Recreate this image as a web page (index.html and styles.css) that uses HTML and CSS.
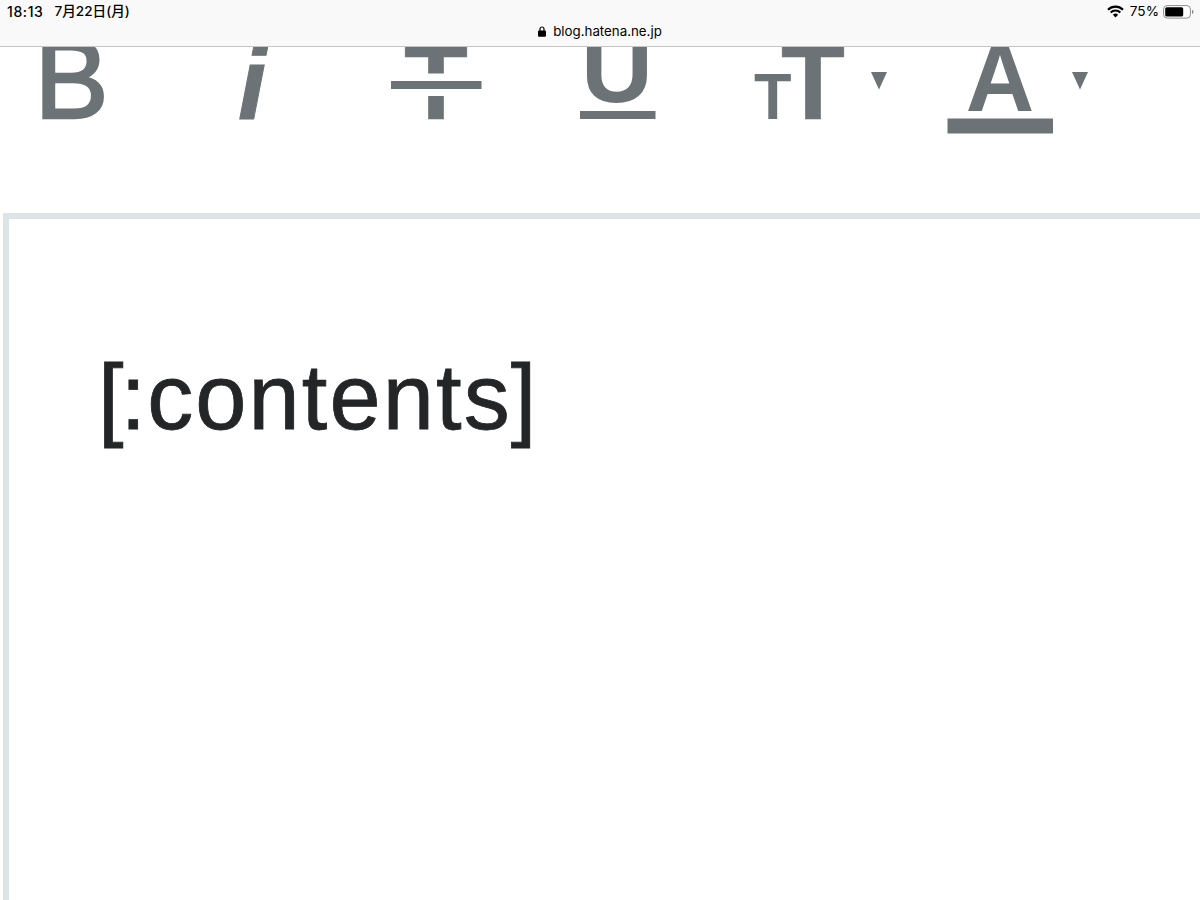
FILE: index.html
```
<!DOCTYPE html>
<html lang="ja">
<head>
    <meta charset="utf-8">
    <title>blog.hatena.ne.jp</title>
    <link rel="stylesheet" href="styles.css">
</head>
<body>
    <header class="browser-bar">
        <div class="status">
            <div class="status-left">
                <span class="time">18:13</span>
                <span class="date">7月22日(月)</span>
            </div>
            <div class="status-right">
                <svg class="wifi" viewBox="0 0 17 13" width="17" height="13">
                    <path d="M1 4.800a10.600 10.600 0 0 1 15 0M3.700 7.500a6.800 6.800 0 0 1 9.600 0" fill="none" stroke="#000" stroke-width="2.200"/>
                    <path d="M5.900 9.800a3.700 3.700 0 0 1 5.200 0L8.500 12.400z"/>
                </svg>
                <span class="percent">75%</span>
                <svg class="battery" viewBox="0 0 31 14" width="31" height="14">
                    <rect x="0.600" y="0.600" width="26.800" height="12.500" rx="3.500" fill="#fff" stroke="#8c8c8c"/>
                    <rect x="2.200" y="2.200" width="18" height="9.300" rx="1.600"/>
                    <path d="M29 4.800q1.600 .6 1.600 2.100T29 9z" fill="#8c8c8c"/>
                </svg>
            </div>
        </div>
        <div class="address">
            <svg class="lock" viewBox="0 0 8 11" width="8" height="11">
                <path d="M2 5V3a2 2 0 0 1 4 0v2" fill="none" stroke="#000" stroke-width="1.200"/>
                <rect y="4.600" width="8" height="6.200" rx="1"/>
            </svg>
            <span class="url">blog.hatena.ne.jp</span>
        </div>
    </header>

    <nav class="toolbar">
        <svg class="tool bold" viewBox="0 0 80 100" width="80" height="100">
            <text class="letter-b" x="-1.500" y="71" font-size="111">B</text>
        </svg>
        <svg class="tool italic" viewBox="0 0 60 100" width="60" height="100">
            <text class="letter-i" x="14" y="71.500" font-size="102">i</text>
        </svg>
        <svg class="tool strike" viewBox="0 0 91 100" width="91" height="100">
            <text x="13" y="72" font-size="107" textLength="64" lengthAdjust="spacingAndGlyphs" class="letter-t">T</text>
            <rect class="gap" y="26.500" width="91" height="22.500"/>
            <rect y="34" width="90.500" height="8"/>
        </svg>
        <svg class="tool underline" viewBox="0 0 76 100" width="76" height="100">
            <text x="1" y="55" font-size="101" textLength="72" lengthAdjust="spacingAndGlyphs">U</text>
            <rect y="64" width="75.500" height="8"/>
        </svg>
        <svg class="tool size" viewBox="0 0 92 100" width="92" height="100">
            <text x="0" y="72" font-size="65" textLength="37.500" lengthAdjust="spacingAndGlyphs">T</text>
            <text x="27" y="72" font-size="107" textLength="64" lengthAdjust="spacingAndGlyphs" class="letter-t">T</text>
        </svg>
        <svg class="caret" viewBox="0 0 16 100" width="16" height="100">
            <path d="M0 25h16L8 42.500z"/>
        </svg>
        <svg class="tool color" viewBox="0 0 106 100" width="106" height="100">
            <text x="18.800" y="64" font-size="97" textLength="68.500" lengthAdjust="spacingAndGlyphs">A</text>
            <rect x="0.500" y="71.500" width="105.500" height="15"/>
        </svg>
        <svg class="caret" viewBox="0 0 16 100" width="16" height="100">
            <path d="M0 25h16L8 42.500z"/>
        </svg>
    </nav>

    <main class="editor">
        <p><span class="open">[</span>:<span class="word">content</span>s]</p>
    </main>
</body>
</html>
```

FILE: styles.css
```
* {
    box-sizing: border-box;
}
body {
    margin: 0;
    height: 900px;
    overflow: hidden;
    background: #fff;
    font-family: Inter, "Noto Sans CJK JP", sans-serif;
    display: flex;
    flex-direction: column;
}
.browser-bar {
    flex: none;
    height: 47px;
    background: #f9f9f9;
    border-bottom: 1px solid #c4c5c5;
    color: #000;
}
.status {
    display: flex;
    justify-content: space-between;
    height: 23px;
    padding: 0 6px 0 7px;
    line-height: 23px;
    font-size: 14px;
}
.status-left {
    display: flex;
    gap: 11px;
    font-weight: 500;
}
.time {
    letter-spacing: 0.6px;
}
.date {
    font-size: 13.6px;
}
.status-right {
    display: flex;
    align-items: center;
}
.percent {
    margin: 0 4px 0 6px;
    font-size: 13.6px;
}
.address {
    display: flex;
    justify-content: center;
    align-items: center;
    gap: 7px;
    height: 17px;
    font-size: 13.3px;
    line-height: 15px;
}
.url {
    margin-top: -1px;
}

/* formatting buttons */
.toolbar {
    flex: none;
    display: flex;
    height: 166px;
    padding-left: 36px;
    fill: #6c7376;
    font-family: "Liberation Sans", Arial, sans-serif;
    font-weight: bold;
}
.toolbar svg {
    flex: none;
    overflow: hidden;
}
.letter-b {
    font-weight: normal;
    stroke: #6c7376;
    stroke-width: 2.5px;
}
.letter-i {
    font-style: italic;
    stroke: #6c7376;
    stroke-width: 1px;
}
.letter-t {
    stroke: #6c7376;
    stroke-width: 0.6px;
}
.gap {
    fill: #fff;
}
.italic {
    margin-left: 108px;
}
.strike {
    margin-left: 107px;
}
.underline {
    margin-left: 97.5px;
}
.size {
    margin-left: 98.5px;
}
.size + .caret {
    margin-left: 25px;
}
.color {
    margin-left: 60px;
}
.color + .caret {
    margin-left: 19px;
}

.editor {
    flex: 1;
    margin-left: 3px;
    padding: 122.5px 0 0 89px;
    border-top: 6px solid #dde4e7;
    border-left: 6px solid #dde4e7;
}
.editor p {
    margin: 0;
    color: #232527;
    font-family: "Liberation Sans", Arial, sans-serif;
    font-size: 92px;
    line-height: 110px;
    letter-spacing: 1px;
    -webkit-text-stroke: 0.8px #232527;
}
.open {
    letter-spacing: -3px;
}
.word {
    letter-spacing: 2.1px;
}
```
